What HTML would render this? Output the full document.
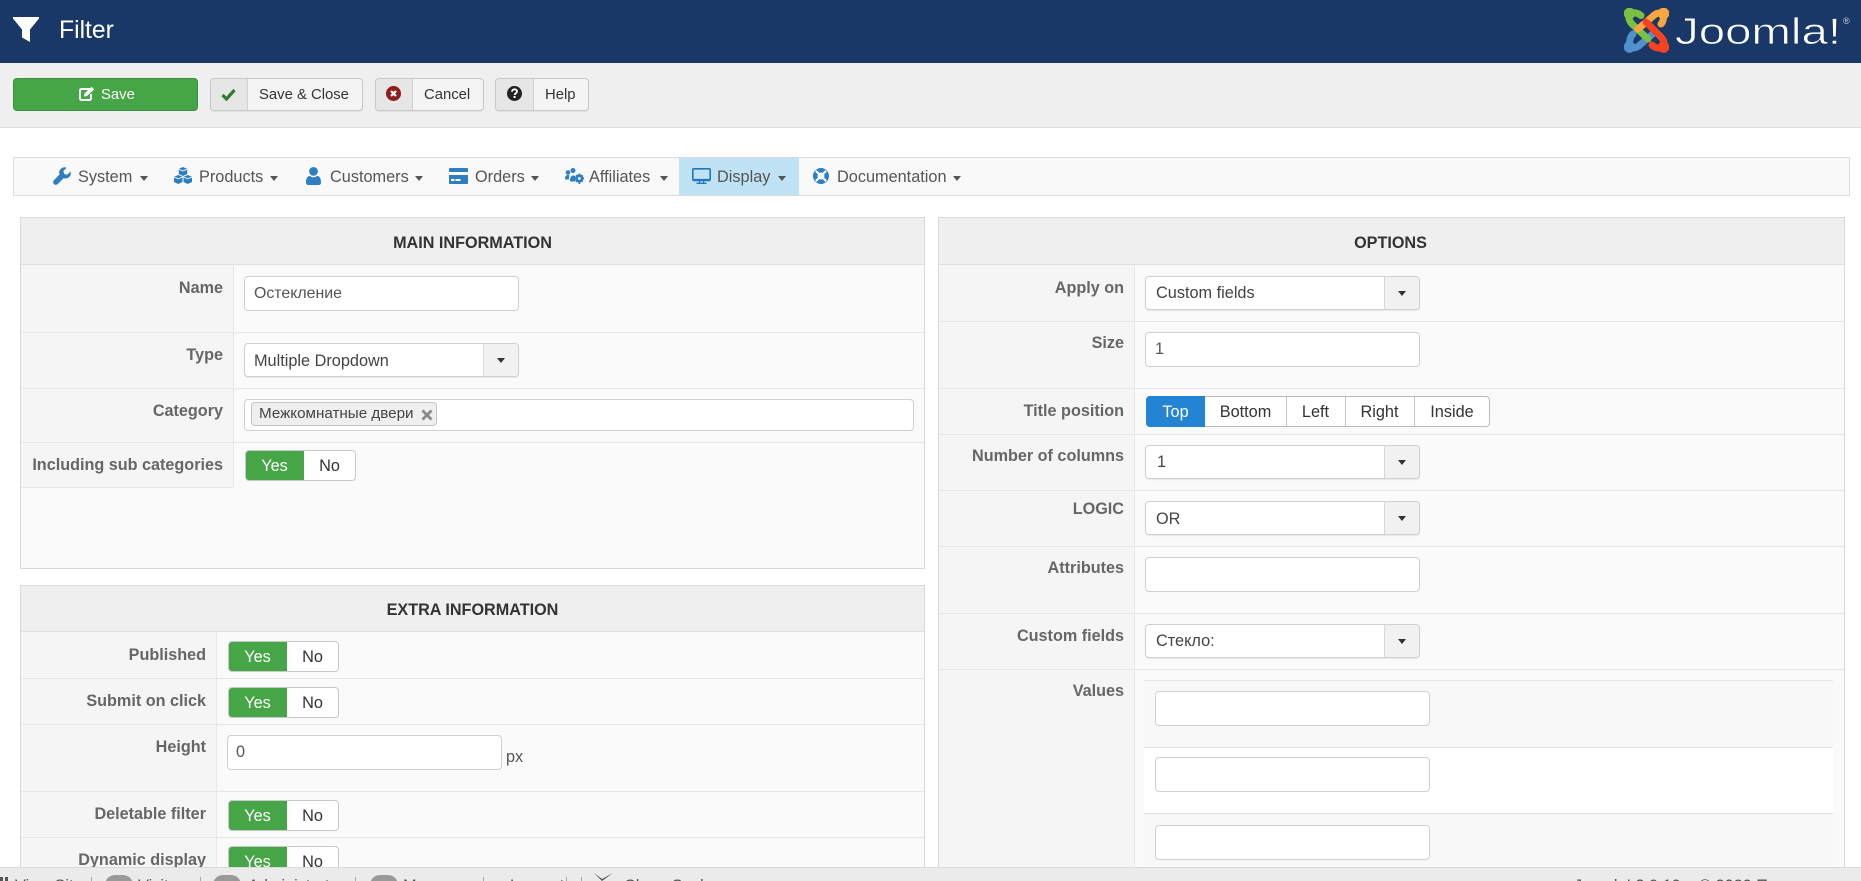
<!DOCTYPE html>
<html><head><meta charset="utf-8"><title>Filter</title>
<style>
html,body{margin:0;padding:0;width:1861px;height:881px;overflow:hidden;background:#fff}
body{position:relative;font-family:"Liberation Sans","Noto Sans CJK SC",sans-serif;font-size:14.85px;color:#555}
.a,.i,.l,.t,.sel,.tg,svg.a{position:absolute}
.a{box-sizing:border-box}
.t{white-space:nowrap;line-height:20px;height:20px}
.v{font-size:16.3px;margin-top:1px}
.l{white-space:nowrap;line-height:20px;height:20px;text-align:right;font-weight:bold;color:#666;left:0;font-size:16.2px;margin-top:1px}
.h{font-weight:bold;color:#333;text-align:center;line-height:20px;height:20px;position:absolute;white-space:nowrap;font-size:16.2px;margin-top:1px}
.i{box-sizing:border-box;background:#fff;border:1px solid #d0d0d0;border-radius:4px}
.sel{box-sizing:border-box;background:#fff;border:1px solid #d0d0d0;border-radius:4px;box-shadow:0 1px 1px rgba(0,0,0,.08)}
.sel b{position:absolute;right:0;top:0;bottom:0;width:34px;background:#f1f1f1;border-left:1px solid #d8d8d8;border-radius:0 3px 3px 0}
.sel b:after{content:"";position:absolute;left:13px;top:14px;border:4.5px solid transparent;border-top:5px solid #333;border-bottom:0}
.tg{box-sizing:border-box;background:#fff;border:1px solid #c8c8c8;border-radius:4px;height:31px;width:111px;overflow:hidden;text-align:center;color:#333;font-size:16.3px}
.tg span{position:absolute;top:-1px;bottom:-1px;line-height:32px}
.tg .y{left:-1px;width:59px;background:#46a546;color:#fff}
.tg .n{left:58px;right:0}
.btn{position:absolute;box-sizing:border-box;height:33px;top:78px;background:#f4f4f4;border:1px solid #c8c8c8;border-radius:4px;box-shadow:0 1px 1px rgba(0,0,0,.06)}
.btn u{position:absolute;left:0;top:0;bottom:0;background:#e6e6e6;border-right:1px solid #d0d0d0;border-radius:3px 0 0 3px}
.c{position:absolute;top:176px;border:4.5px solid transparent;border-top:5px solid #555;border-bottom:0}
.m{top:167px;color:#555;font-size:16.3px}
.ln{position:absolute;background:#e6e6e6;height:1px}
.vl{position:absolute;background:#e8e8e8;width:1px}
.f{position:absolute;top:877px;line-height:18px;font-size:16.3px;color:#555;white-space:nowrap}
.fs{position:absolute;top:877px;height:4px;width:1px;background:#aaa}
.bd{position:absolute;top:875px;width:28px;height:20px;border-radius:10px;background:#999}
</style></head><body>

<!-- header -->
<div class="a" style="left:0;top:0;width:1861px;height:63px;background:#1a3867"></div>
<svg class="a" style="left:13px;top:17px" width="26" height="25" viewBox="0 0 26 25"><path d="M0 0H26V1.5L17 12.5V25L9 20.5V12.5L0 1.5Z" fill="#fff"/></svg>
<div class="t" style="left:59px;top:19px;font-size:24.7px;line-height:24px;height:24px;color:#fff">Filter</div>

<!-- logo -->
<svg class="a" style="left:1624px;top:8px" width="45" height="45" viewBox="0 0 45 45" fill="none" stroke-linecap="round" stroke-linejoin="round">
<g stroke="#5091cd" stroke-width="7"><path d="M5.5 39C5 33 6 29 9 26"/><path d="M6 39C11 41 14 39 17 36L31 24"/></g><circle cx="5.5" cy="39" r="5.8" fill="#5091cd"/>
<g stroke="#7ac143" stroke-width="7"><path d="M5 5.500C10 4 14 5 17 7.500"/><path d="M5 5.500C4 11 6 14 9 17L24 31"/></g><circle cx="5.500" cy="5.500" r="5.800" fill="#7ac143"/>
<g stroke="#f9a541" stroke-width="7"><path d="M39 5.500C40 11 39 14 37 16"/><path d="M39 5.500C34 4 31 6 28 9L14 21"/></g><circle cx="39.500" cy="5.500" r="5.800" fill="#f9a541"/>
<g stroke="#f44321" stroke-width="7"><path d="M40 39C34 41 31 40 28 37"/><path d="M40 39C41 34 39 31 36 28L22 14"/></g><circle cx="39.500" cy="39" r="5.800" fill="#f44321"/>
</svg>
<svg class="a" style="left:1670px;top:8px" width="191" height="50" viewBox="0 0 191 50"><text x="5" y="36" font-family="Liberation Sans" font-size="37.5" fill="#fff" stroke="#1a3867" stroke-width=".7" textLength="166" lengthAdjust="spacingAndGlyphs">Joomla!</text><text x="173" y="16" font-family="Liberation Sans" font-size="9" fill="#cdd4e0">®</text></svg>

<!-- toolbar -->
<div class="a" style="left:0;top:63px;width:1861px;height:65px;background:#efefef;border-bottom:1px solid #dcdcdc"></div>
<div class="a" style="left:13px;top:78px;width:185px;height:33px;background:#46a546;border:1px solid #3a8f3a;border-radius:4px"></div>
<svg class="a" style="left:79px;top:86px" width="16" height="15" viewBox="0 0 16 15"><path d="M11 3H2.500A1.500 1.500 0 0 0 1 4.500v8A1.500 1.500 0 0 0 2.500 14h8a1.500 1.500 0 0 0 1.500-1.500V8" fill="none" stroke="#fff" stroke-width="2"/><path d="M5 10.500l.5-3L12.500.8l2.700 2.700L8 10z" fill="#fff"/></svg>
<div class="t" style="left:101px;top:85px;color:#fff">Save</div>

<div class="btn" style="left:210px;width:153px"><u style="width:36px"></u></div>
<svg class="a" style="left:221px;top:88px" width="15" height="13" viewBox="0 0 15 13"><path d="M1.500 7l4 4L13.500 2" fill="none" stroke="#2f7d32" stroke-width="3.200"/></svg>
<div class="t" style="left:259px;top:85px;color:#333">Save &amp; Close</div>

<div class="btn" style="left:375px;width:109px"><u style="width:36px"></u></div>
<svg class="a" style="left:386px;top:86px" width="15" height="15" viewBox="0 0 15 15"><circle cx="7.500" cy="7.500" r="7.500" fill="#8f1d1d"/><path d="M5 5l5 5M10 5l-5 5" stroke="#fff" stroke-width="2.200"/></svg>
<div class="t" style="left:424px;top:85px;color:#333">Cancel</div>

<div class="btn" style="left:495px;width:94px"><u style="width:37px"></u></div>
<svg class="a" style="left:507px;top:86px" width="15" height="15" viewBox="0 0 15 15"><circle cx="7.500" cy="7.500" r="7.500" fill="#222"/><path d="M5 5.800C5 4 6.200 3.300 7.600 3.300S10 4.200 10 5.500C10 7.200 7.600 7.300 7.600 9" fill="none" stroke="#fff" stroke-width="1.800"/><rect x="6.600" y="10" width="2" height="2" fill="#fff"/></svg>
<div class="t" style="left:545px;top:85px;color:#333">Help</div>

<!-- menu -->
<div class="a" style="left:13px;top:157px;width:1837px;height:39px;background:#f9f9f9;border:1px solid #dcdcdc"></div>
<div class="a" style="left:679px;top:158px;width:120px;height:37px;background:#bfe2f5"></div>

<svg class="a" style="left:53px;top:167px" width="18" height="18" viewBox="0 0 18 18"><path d="M17.500 4.500l-3.300 3.200-3-.7-.8-3L13.600.8A5.200 5.200 0 0 0 6.600 7.400L.9 13.200a2.700 2.700 0 0 0 3.900 3.800l5.900-5.900a5.200 5.200 0 0 0 6.800-6.600z" fill="#2d7fc1"/></svg>
<div class="t m" style="left:78px">System</div><div class="c" style="left:140px"></div>

<svg class="a" style="left:174px;top:167px" width="18" height="17" viewBox="0 0 18 17" fill="#2d7fc1"><path d="M9 0l4.200 1.800V7L9 9 4.800 7V1.800z"/><path d="M4.300 8L8.500 9.800V15L4.300 17 0 15V9.800z"/><path d="M13.700 8L18 9.800V15l-4.300 2-4.200-2V9.800z"/><path d="M5 2.200L9 4l4-1.800M0 10l4.300 1.800L8.500 10M9.500 10l4.200 1.800L18 10" fill="none" stroke="#f9f9f9" stroke-width=".9"/></svg>
<div class="t m" style="left:199px">Products</div><div class="c" style="left:270px"></div>

<svg class="a" style="left:306px;top:167px" width="15" height="18" viewBox="0 0 15 18" fill="#2d7fc1"><circle cx="7.500" cy="4.400" r="4.400"/><path d="M0 15.500C0 11 1.500 9 4 9c1 .8 2.200 1.300 3.500 1.300S10 9.800 11 9c2.500 0 4 2 4 6.500 0 1.500-1 2.500-2.500 2.500h-10C1 18 0 17 0 15.500z"/></svg>
<div class="t m" style="left:330px">Customers</div><div class="c" style="left:415px"></div>

<svg class="a" style="left:449px;top:168px" width="19" height="16" viewBox="0 0 19 16"><path d="M1 0h17a1 1 0 0 1 1 1v3H0V1a1 1 0 0 1 1-1zM0 7h19v8a1 1 0 0 1-1 1H1a1 1 0 0 1-1-1z" fill="#2d7fc1"/><rect x="2" y="11" width="3.500" height="2" fill="#f9f9f9"/><rect x="6.500" y="11" width="5" height="2" fill="#f9f9f9"/></svg>
<div class="t m" style="left:475px">Orders</div><div class="c" style="left:531px"></div>

<svg class="a" style="left:565px;top:168px" width="19" height="16" viewBox="0 0 19 16" fill="#2d7fc1"><circle cx="3" cy="4.500" r="2.300"/><circle cx="8" cy="2.500" r="2.500"/><path d="M0 11c0-2.500 1-4 2.800-4 .7 0 1.200.2 1.700.5C4 8.500 3.800 10 3.800 11.500H1c-.6 0-1-.2-1-.5z"/><path d="M5 13c0-3.500 1.200-5.500 3.200-5.500.8 0 1.500.3 2 .7V13.500H6c-.6 0-1-.2-1-.5z"/><circle cx="14.300" cy="10.500" r="3.200" fill="none" stroke="#2d7fc1" stroke-width="2"/><path d="M14.300 5.500v10.500M9.500 10.500h9.500M11 7.200l6.600 6.600M17.600 7.200l-6.600 6.600" stroke="#2d7fc1" stroke-width="1.700"/><circle cx="14.300" cy="10.500" r="1.400" fill="#f9f9f9"/></svg>
<div class="t m" style="left:589px">Affiliates</div><div class="c" style="left:660px"></div>

<svg class="a" style="left:692px;top:168px" width="19" height="16" viewBox="0 0 19 16" fill="none"><rect x=".8" y=".8" width="17.400" height="10.900" rx="1" stroke="#2378bb" stroke-width="1.600"/><path d="M.5 12.500h18" stroke="#2378bb" stroke-width="1.400"/><path d="M7.500 13v2M11.500 13v2M4.500 15.300h10" stroke="#2378bb" stroke-width="1.300"/></svg>
<div class="t m" style="left:717px">Display</div><div class="c" style="left:778px"></div>

<svg class="a" style="left:813px;top:168px" width="16" height="16" viewBox="0 0 16 16"><circle cx="8" cy="8" r="8" fill="#2d7fc1"/><circle cx="8" cy="8" r="3.500" fill="#f9f9f9"/><path d="M2.800 2.800l2.800 2.800M13.200 2.800l-2.800 2.800M2.800 13.200l2.800-2.800M13.200 13.200l-2.800-2.800" stroke="#f9f9f9" stroke-width="2.200"/></svg>
<div class="t m" style="left:837px">Documentation</div><div class="c" style="left:953px"></div>

<!-- MAIN INFORMATION -->
<div class="a" style="left:20px;top:217px;width:905px;height:352px;background:#fafafa;border:1px solid #d9d9d9"></div>
<div class="a" style="left:21px;top:218px;width:903px;height:47px;background:#efefef;border-bottom:1px solid #e0e0e0"></div>
<div class="a" style="left:21px;top:265px;width:213px;height:223px;background:#f5f5f5;border-right:1px solid #e8e8e8;border-bottom:1px solid #e6e6e6"></div>
<div class="ln" style="left:21px;top:332px;width:903px"></div>
<div class="ln" style="left:21px;top:388px;width:903px"></div>
<div class="ln" style="left:21px;top:442px;width:903px"></div>
<div class="h" style="left:21px;top:232px;width:903px">MAIN INFORMATION</div>
<div class="l" style="top:277px;width:223px">Name</div>
<div class="l" style="top:344px;width:223px">Type</div>
<div class="l" style="top:400px;width:223px">Category</div>
<div class="l" style="top:454px;width:223px">Including sub categories</div>

<div class="i" style="left:244px;top:276px;width:275px;height:35px"></div>
<div class="t v" style="left:254px;top:283px;font-size:15.9px">Остекление</div>
<div class="sel" style="left:244px;top:343px;width:275px;height:34px"><b></b></div>
<div class="t v" style="left:254px;top:350px;color:#444">Multiple Dropdown</div>
<div class="i" style="left:244px;top:399px;width:670px;height:32px"></div>
<div class="a" style="left:251px;top:402px;width:186px;height:24px;background:#efefef;border:1px solid #c4c4c4;border-radius:4px"></div>
<div class="t" style="left:259px;top:404px;color:#444;font-size:15.2px">Межкомнатные двери</div>
<svg class="a" style="left:421px;top:409px" width="12" height="12" viewBox="0 0 12 12"><path d="M1.500 1.500l9 9M10.500 1.500l-9 9" stroke="#888" stroke-width="2.800"/></svg>
<div class="tg" style="left:245px;top:450px"><span class="y">Yes</span><span class="n">No</span></div>

<!-- EXTRA INFORMATION -->
<div class="a" style="left:20px;top:585px;width:905px;height:296px;background:#fafafa;border:1px solid #d9d9d9;border-bottom:0"></div>
<div class="a" style="left:21px;top:586px;width:903px;height:46px;background:#efefef;border-bottom:1px solid #e0e0e0"></div>
<div class="a" style="left:21px;top:632px;width:196px;height:249px;background:#f5f5f5;border-right:1px solid #e8e8e8"></div>
<div class="ln" style="left:21px;top:678px;width:903px"></div>
<div class="ln" style="left:21px;top:724px;width:903px"></div>
<div class="ln" style="left:21px;top:791px;width:903px"></div>
<div class="ln" style="left:21px;top:837px;width:903px"></div>
<div class="h" style="left:21px;top:599px;width:903px">EXTRA INFORMATION</div>
<div class="l" style="top:644px;width:206px">Published</div>
<div class="l" style="top:690px;width:206px">Submit on click</div>
<div class="l" style="top:736px;width:206px">Height</div>
<div class="l" style="top:803px;width:206px">Deletable filter</div>
<div class="l" style="top:849px;width:206px">Dynamic display</div>
<div class="tg" style="left:228px;top:641px"><span class="y">Yes</span><span class="n">No</span></div>
<div class="tg" style="left:228px;top:687px"><span class="y">Yes</span><span class="n">No</span></div>
<div class="i" style="left:227px;top:735px;width:275px;height:35px"></div>
<div class="t v" style="left:236px;top:741px">0</div>
<div class="t v" style="left:506px;top:746px">px</div>
<div class="tg" style="left:228px;top:800px"><span class="y">Yes</span><span class="n">No</span></div>
<div class="tg" style="left:228px;top:846px"><span class="y">Yes</span><span class="n">No</span></div>

<!-- OPTIONS -->
<div class="a" style="left:938px;top:217px;width:907px;height:664px;background:#fafafa;border:1px solid #d9d9d9;border-bottom:0"></div>
<div class="a" style="left:939px;top:218px;width:905px;height:47px;background:#efefef;border-bottom:1px solid #e0e0e0"></div>
<div class="a" style="left:939px;top:265px;width:196px;height:616px;background:#f5f5f5;border-right:1px solid #e8e8e8"></div>
<div class="ln" style="left:939px;top:321px;width:905px"></div>
<div class="ln" style="left:939px;top:388px;width:905px"></div>
<div class="ln" style="left:939px;top:434px;width:905px"></div>
<div class="ln" style="left:939px;top:490px;width:905px"></div>
<div class="ln" style="left:939px;top:546px;width:905px"></div>
<div class="ln" style="left:939px;top:613px;width:905px"></div>
<div class="ln" style="left:939px;top:669px;width:905px"></div>
<div class="h" style="left:938px;top:232px;width:905px">OPTIONS</div>
<div class="l" style="top:277px;width:1124px">Apply on</div>
<div class="l" style="top:332px;width:1124px">Size</div>
<div class="l" style="top:400px;width:1124px">Title position</div>
<div class="l" style="top:445px;width:1124px">Number of columns</div>
<div class="l" style="top:498px;width:1124px">LOGIC</div>
<div class="l" style="top:557px;width:1124px">Attributes</div>
<div class="l" style="top:625px;width:1124px">Custom fields</div>
<div class="l" style="top:680px;width:1124px">Values</div>

<div class="sel" style="left:1145px;top:276px;width:275px;height:34px"><b></b></div>
<div class="t v" style="left:1156px;top:282px;color:#444">Custom fields</div>
<div class="i" style="left:1145px;top:332px;width:275px;height:35px"></div>
<div class="t v" style="left:1155px;top:338px">1</div>

<div class="a" style="left:1146px;top:396px;width:344px;height:31px;background:#fff;border:1px solid #bbb;border-radius:4px"></div>
<div class="a" style="left:1146px;top:396px;width:59px;height:31px;background:#2384d3;border-radius:4px 0 0 4px"></div>
<div class="vl" style="left:1286px;top:397px;height:29px;background:#c4c4c4"></div>
<div class="vl" style="left:1345px;top:397px;height:29px;background:#c4c4c4"></div>
<div class="vl" style="left:1414px;top:397px;height:29px;background:#c4c4c4"></div>
<div class="t v" style="left:1146px;top:401px;width:59px;text-align:center;color:#fff">Top</div>
<div class="t v" style="left:1205px;top:401px;width:81px;text-align:center;color:#333">Bottom</div>
<div class="t v" style="left:1286px;top:401px;width:59px;text-align:center;color:#333">Left</div>
<div class="t v" style="left:1345px;top:401px;width:69px;text-align:center;color:#333">Right</div>
<div class="t v" style="left:1414px;top:401px;width:76px;text-align:center;color:#333">Inside</div>

<div class="sel" style="left:1145px;top:445px;width:275px;height:34px"><b></b></div>
<div class="t v" style="left:1157px;top:451px;color:#444">1</div>
<div class="sel" style="left:1145px;top:501px;width:275px;height:34px"><b></b></div>
<div class="t v" style="left:1156px;top:508px;color:#444">OR</div>
<div class="i" style="left:1145px;top:557px;width:275px;height:35px"></div>
<div class="sel" style="left:1145px;top:624px;width:275px;height:34px"><b></b></div>
<div class="t v" style="left:1156px;top:630px;color:#444">Стекло:</div>

<!-- values nested -->
<div class="a" style="left:1144px;top:680px;width:689px;height:201px;background:#f8f8f8;border-top:1px solid #e6e6e6"></div>
<div class="a" style="left:1144px;top:747px;width:689px;height:67px;background:#fff;border-top:1px solid #e6e6e6;border-bottom:1px solid #e0e0e0"></div>
<div class="i" style="left:1155px;top:691px;width:275px;height:35px"></div>
<div class="i" style="left:1155px;top:757px;width:275px;height:35px"></div>
<div class="i" style="left:1155px;top:825px;width:275px;height:35px"></div>

<!-- footer -->
<div class="a" style="left:0;top:867px;width:1861px;height:14px;background:#ebebeb;border-top:1px solid #dadada;overflow:hidden"></div>
<svg class="a" style="left:0;top:877px" width="10" height="4"><rect x="0" y="0" width="3" height="4" fill="#555"/><rect x="5" y="0" width="3" height="4" fill="#555"/></svg>
<div class="f" style="left:15px">View Site</div>
<div class="fs" style="left:91px"></div>
<div class="bd" style="left:105px"></div>
<div class="f" style="left:138px">Visitors</div>
<div class="fs" style="left:200px"></div>
<div class="bd" style="left:213px"></div>
<div class="f" style="left:248px">Administrators</div>
<div class="fs" style="left:355px"></div>
<div class="bd" style="left:370px"></div>
<div class="f" style="left:403px">Messages</div>
<div class="fs" style="left:483px"></div>
<div class="f" style="left:510px">Log out</div>
<div class="fs" style="left:566px"></div>
<div class="fs" style="left:581px"></div>
<svg class="a" style="left:593px;top:873px" width="21" height="8" viewBox="0 0 21 8"><path d="M1 0L9 6 20 0 9 8z" fill="#555"/></svg>
<div class="f" style="left:624px">Clean Cache</div>
<div class="f" style="left:1574px">Joomla! 3.9.19</div>
<div class="f" style="left:1699px">© 2020 Плагин</div>
</body></html>
